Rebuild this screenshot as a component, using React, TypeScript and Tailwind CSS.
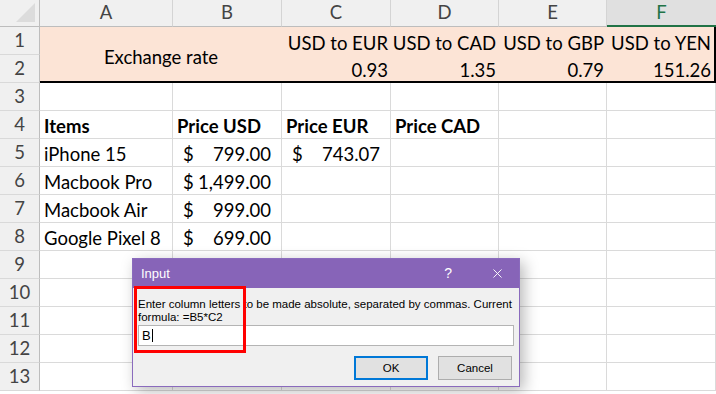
import { X } from 'lucide-react'

const cols = ['A', 'B', 'C', 'D', 'E', 'F']

const rates = [
  { label: 'USD to EUR', value: '0.93' },
  { label: 'USD to CAD', value: '1.35' },
  { label: 'USD to GBP', value: '0.79' },
  { label: 'USD to YEN', value: '151.26' },
]

const items = [
  { name: 'iPhone 15', usd: '799.00', eur: '743.07' },
  { name: 'Macbook Pro', usd: '1,499.00' },
  { name: 'Macbook Air', usd: '999.00' },
  { name: 'Google Pixel 8', usd: '699.00' },
]

const cell = 'border-r border-b border-[#dadada] flex items-end px-[4px] pb-[2px] leading-[20px] whitespace-nowrap overflow-visible'

const RowHead = ({ n }: { n: number }) => (
  <div className="flex items-center justify-center border-r border-r-[#bdbdbd] border-b border-b-[#d9d9d9] bg-[#f0f0f0] text-[#444]">
    {n}
  </div>
)

const Money = ({ value }: { value: string }) => (
  <div className={`${cell} justify-between pl-[10px] pr-[10px]`}>
    <span>$</span>
    <span>{value}</span>
  </div>
)

const Empty = ({ count }: { count: number }) => (
  <>
    {Array.from({ length: count }).map((_, i) => (
      <div key={i} className={cell} />
    ))}
  </>
)

const Dialog = () => (
  <div className="absolute left-[132px] top-[258px] h-[129px] w-[388px] border border-[#8a6bbd] bg-[#f0f0f0] shadow-[4px_4px_14px_rgba(0,0,0,0.28)] font-['Liberation_Sans',sans-serif] text-[11.5px] text-black">
    <div className="flex h-[29px] items-center bg-[#8764b8] pl-[8px] text-[13px] text-white">
      <span className="flex-1">Input</span>
      <span className="mr-[38px] text-[14px]">?</span>
      <X className="mr-[14px] h-[15px] w-[15px]" strokeWidth={1.5} />
    </div>
    <div className="px-[5px] pt-[10px] leading-[13px]">
      <p className="whitespace-nowrap">Enter column letters to be made absolute, separated by commas. Current</p>
      <p>formula: =B5*C2</p>
      <div className="mt-[1px] flex h-[21px] items-center border border-[#b4b4b4] bg-white px-[3px] text-[13px]">
        B<span className="ml-[1px] h-[13px] w-px bg-black" />
      </div>
      <div className="mt-[10px] flex justify-end gap-[10px] pr-[2px]">
        <button className="h-[24px] w-[74px] border-2 border-[#0078d7] bg-[#e1e1e1]">OK</button>
        <button className="h-[24px] w-[74px] border border-[#adadad] bg-[#e1e1e1]">Cancel</button>
      </div>
    </div>
    <div className="absolute left-[1px] top-[27px] h-[67px] w-[112px] border-[3px] border-[#ff0000]" />
  </div>
)

export default function App() {
  return (
    <div className="relative h-[394px] w-[716px] overflow-hidden bg-white font-['Lato',sans-serif] text-[18.5px] text-black">
      <div className="grid grid-cols-[40px_133px_109px_109px_108px_108px_109px] grid-rows-[27px_repeat(13,28px)]">
        {/* header row */}
        <div className="relative border-r border-r-[#bdbdbd] border-b border-b-[#bdbdbd] bg-[#f0f0f0]">
          <svg className="absolute bottom-[4px] right-[4px]" width="19" height="19" viewBox="0 0 19 19">
            <path d="M19 0 L19 19 L0 19 Z" fill="#dcdcdc" />
          </svg>
        </div>
        {cols.map((c) =>
          c === 'F' ? (
            <div key={c} className="flex items-center justify-center border-b-2 border-b-[#217346] bg-[#e0e0e0] text-[#217346]">
              {c}
            </div>
          ) : (
            <div key={c} className="flex items-center justify-center border-r border-r-[#d4d4d4] border-b border-b-[#bdbdbd] bg-[#f0f0f0] text-[#444]">
              {c}
            </div>
          )
        )}

        {/* rows 1-2: exchange rate block */}
        <RowHead n={1} />
        <div className="col-span-2 row-span-2 flex items-center justify-center border-b-2 border-black bg-[#fce4d6] pt-[5px] leading-[20px]">
          Exchange rate
        </div>
        {rates.map((r, i) => (
          <div key={r.label} className={`flex items-end justify-end bg-[#fce4d6] px-[3px] pb-[2px] leading-[20px] whitespace-nowrap ${i === 3 ? 'border-r-2 border-black' : ''}`}>
            {r.label}
          </div>
        ))}
        <RowHead n={2} />
        {rates.map((r, i) => (
          <div key={r.value} className={`flex items-end justify-end border-b-2 border-black bg-[#fce4d6] px-[3px] pb-[1px] leading-[20px] ${i === 3 ? 'border-r-2' : ''}`}>
            {r.value}
          </div>
        ))}

        <RowHead n={3} />
        <Empty count={6} />

        <RowHead n={4} />
        <div className={`${cell} font-bold`}>Items</div>
        <div className={`${cell} font-bold`}>Price USD</div>
        <div className={`${cell} font-bold`}>Price EUR</div>
        <div className={`${cell} font-bold`}>Price CAD</div>
        <Empty count={2} />

        {items.map((it, i) => (
          <div key={it.name} className="contents">
            <RowHead n={5 + i} />
            <div className={cell}>{it.name}</div>
            <Money value={it.usd} />
            {it.eur ? <Money value={it.eur} /> : <div className={cell} />}
            <Empty count={3} />
          </div>
        ))}

        {[9, 10, 11, 12, 13].map((n) => (
          <div key={n} className="contents">
            <RowHead n={n} />
            <Empty count={6} />
          </div>
        ))}
      </div>
      <Dialog />
    </div>
  )
}
